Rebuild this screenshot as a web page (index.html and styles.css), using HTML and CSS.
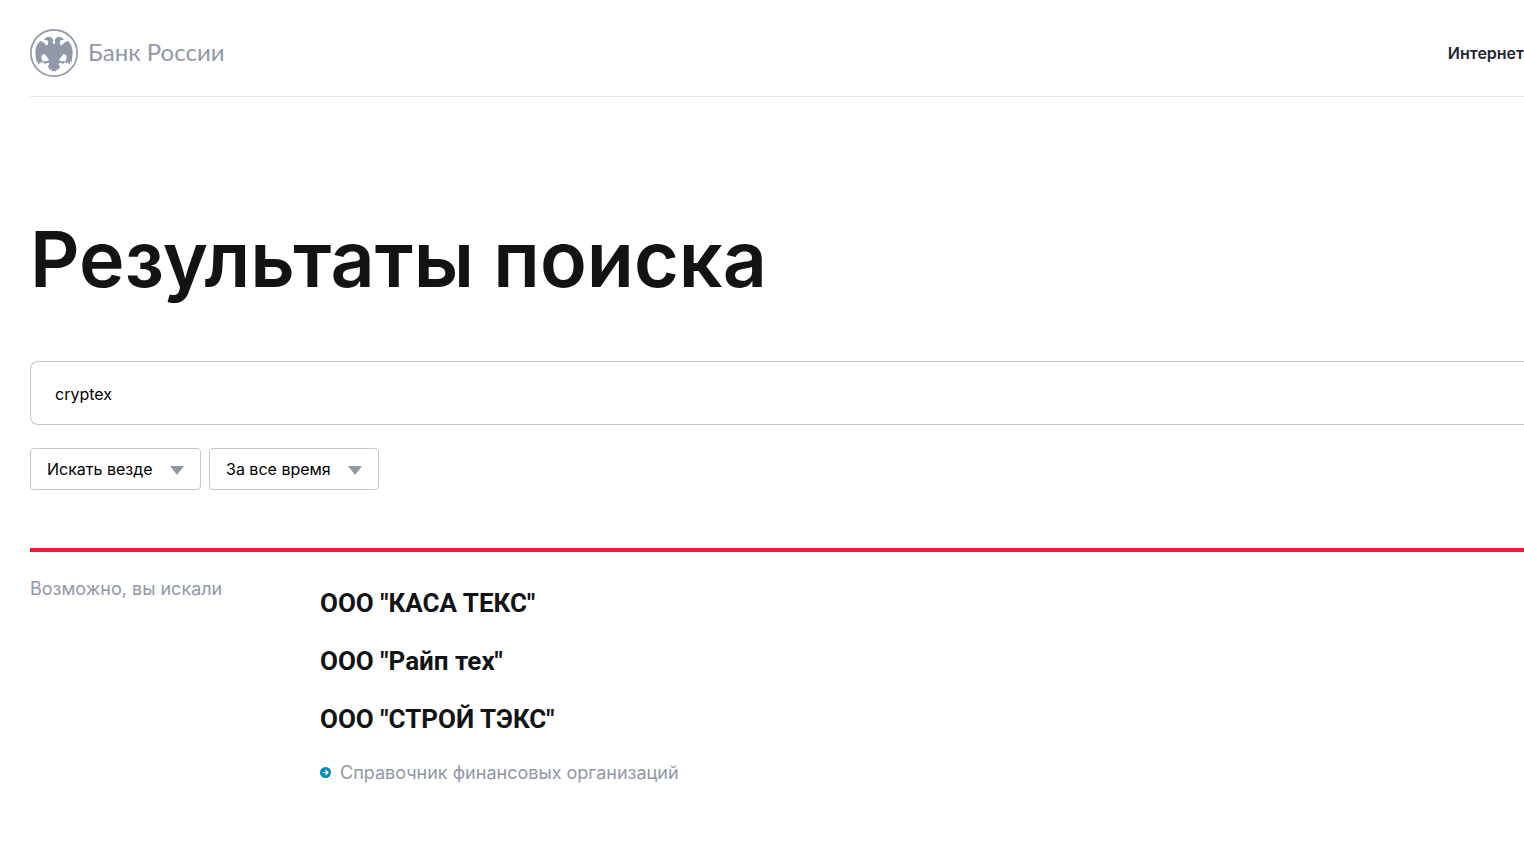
FILE: index.html
```html
<!DOCTYPE html>
<html lang="ru">
<head>
<meta charset="utf-8">
<meta name="viewport" content="width=device-width, initial-scale=1">
<title>Результаты поиска | Банк России</title>
<link rel="stylesheet" href="styles.css">
</head>
<body>
<div class="page">
  <header class="header">
    <a class="logo" href="#">
      <svg class="logo-mark" viewBox="18 20 144 144" aria-hidden="true">
        <circle cx="90" cy="92" r="69.500" fill="none" stroke="currentColor" stroke-width="5"/>
        <path fill="currentColor" d="M60 53 L67 45 L78 43 L85 48 L88 54 L86 62 L90 66 L94 62 L92 54 L95 48 L102 43 L113 45 L120 53 L110 54 L107 59 L109 67 L114 69 L120 61 L131 55 L139 64 L144 75 L146 88 L145 104 L142 121 L139 117 L137 127 L133 123 L130 118 L127 124 L124 117 L128 108 L126 98 L119 94 L113 102 L107 109 L105 114 L113 117 L120 116 L126 121 L119 121 L118 126 L112 122 L105 122 L104 127 L109 133 L105 137 L103 143 L98 141 L95 148 L90 145 L85 148 L82 141 L77 143 L75 137 L71 133 L76 127 L75 122 L68 122 L62 126 L61 121 L54 121 L60 116 L67 117 L75 114 L73 109 L67 102 L61 94 L54 98 L52 108 L56 117 L53 124 L50 118 L47 123 L43 127 L41 117 L38 121 L35 104 L34 88 L36 75 L41 64 L49 55 L60 61 L66 69 L71 67 L73 59 L70 54 Z"/>
      </svg>
      <span class="logo-name">Банк России</span>
    </a>
    <nav class="nav"><a class="nav-link" href="#">Интернет</a></nav>
  </header>

  <main>
    <h1 class="title">Результаты поиска</h1>

    <form class="search">
      <input class="search-input" type="text" value="cryptex" aria-label="Поиск">
      <div class="filters">
        <label class="filter">
          <select class="filter-select" aria-label="Где искать"><option>Искать везде</option></select>
          <svg class="filter-arrow" viewBox="0 0 14 9" aria-hidden="true"><path d="M0 0h14L7 9z"/></svg>
        </label>
        <label class="filter">
          <select class="filter-select" aria-label="Период"><option>За все время</option></select>
          <svg class="filter-arrow" viewBox="0 0 14 9" aria-hidden="true"><path d="M0 0h14L7 9z"/></svg>
        </label>
      </div>
    </form>

    <section class="results">
      <h2 class="results-label">Возможно, вы искали</h2>
      <div class="results-body">
        <ul class="results-list">
          <li><a class="result" href="#">ООО "КАСА ТЕКС"</a></li>
          <li><a class="result" href="#">ООО "Райп тех"</a></li>
          <li><a class="result" href="#">ООО "СТРОЙ ТЭКС"</a></li>
        </ul>
        <a class="directory" href="#">
          <svg class="directory-icon" viewBox="0 0 12 12" aria-hidden="true">
            <circle cx="5.500" cy="5.500" r="5.500" fill="#0586c9"/>
            <path d="M2.500 5.500h5.500M5.500 3L8 5.500 5.500 8" fill="none" stroke="#fff" stroke-width="1.200"/>
          </svg>
          <span>Справочник финансовых организаций</span>
        </a>
      </div>
    </section>
  </main>
</div>
</body>
</html>
```
FILE: styles.css
```css
* {
  box-sizing: border-box;
}

body {
  margin: 0;
  background: #fff;
  color: #121315;
  font-family: Inter, "Liberation Sans", sans-serif;
}

a {
  color: inherit;
  text-decoration: none;
}

.page {
  padding-left: 30px;
  overflow-x: hidden;
}

.header {
  display: flex;
  align-items: center;
  justify-content: space-between;
  padding: 29px 0 19px;
  border-bottom: 1px solid #e6e7ea;
}

.logo {
  display: flex;
  align-items: center;
  gap: 10px;
  color: #9198a8;
}

.logo-mark {
  width: 48px;
  height: 48px;
}

.logo-name {
  font-family: Lato, "Open Sans", sans-serif;
  font-size: 24px;
  line-height: 44px;
  padding-bottom: 2px;
}

.nav-link {
  color: #222633;
  font-size: 16px;
  font-weight: 600;
  line-height: 24px;
}

.title {
  margin: 112px 0 52px;
  font-size: 77px;
  font-weight: 600;
  line-height: 100px;
}

.search-input {
  display: block;
  width: 100%;
  height: 64px;
  padding: 2px 24px 0;
  border: 1px solid #c4c6cc;
  border-right: 0;
  border-radius: 8px 0 0 8px;
  background: #fff;
  color: #000;
  font: 400 16px/24px Inter, sans-serif;
}

.filters {
  display: flex;
  gap: 8px;
  margin-top: 23px;
}

.filter {
  display: grid;
  align-items: center;
}

.filter-select,
.filter-arrow {
  grid-area: 1 / 1;
}

.filter-select {
  height: 42px;
  padding: 0 47px 0 16px;
  border: 1px solid #c4c6cc;
  border-radius: 4px;
  appearance: none;
  background: #fff;
  color: #000;
  font: 400 16px/24px Inter, sans-serif;
}

.filter-arrow {
  justify-self: end;
  width: 14px;
  height: 9px;
  margin-top: 2px;
  margin-right: 17px;
  fill: #9198a8;
  pointer-events: none;
}

.results {
  display: grid;
  grid-template-columns: 290px 1fr;
  margin-top: 58px;
  padding-top: 23px;
  border-top: 4px solid #ee1934;
}

.results-label {
  margin: 0;
  color: #9198a8;
  font-size: 18px;
  font-weight: 400;
  line-height: 28px;
}

.results-list {
  display: grid;
  gap: 22px;
  margin: 0;
  padding: 10px 0 0;
  list-style: none;
}

.result {
  display: block;
  font-family: Roboto, Inter, sans-serif;
  font-size: 26px;
  font-weight: 700;
  line-height: 36px;
}

.directory {
  display: flex;
  align-items: center;
  gap: 8px;
  margin-top: 22px;
  color: #9198a8;
  font-size: 18px;
  line-height: 28px;
}

.directory-icon {
  width: 12px;
  height: 12px;
}
```
